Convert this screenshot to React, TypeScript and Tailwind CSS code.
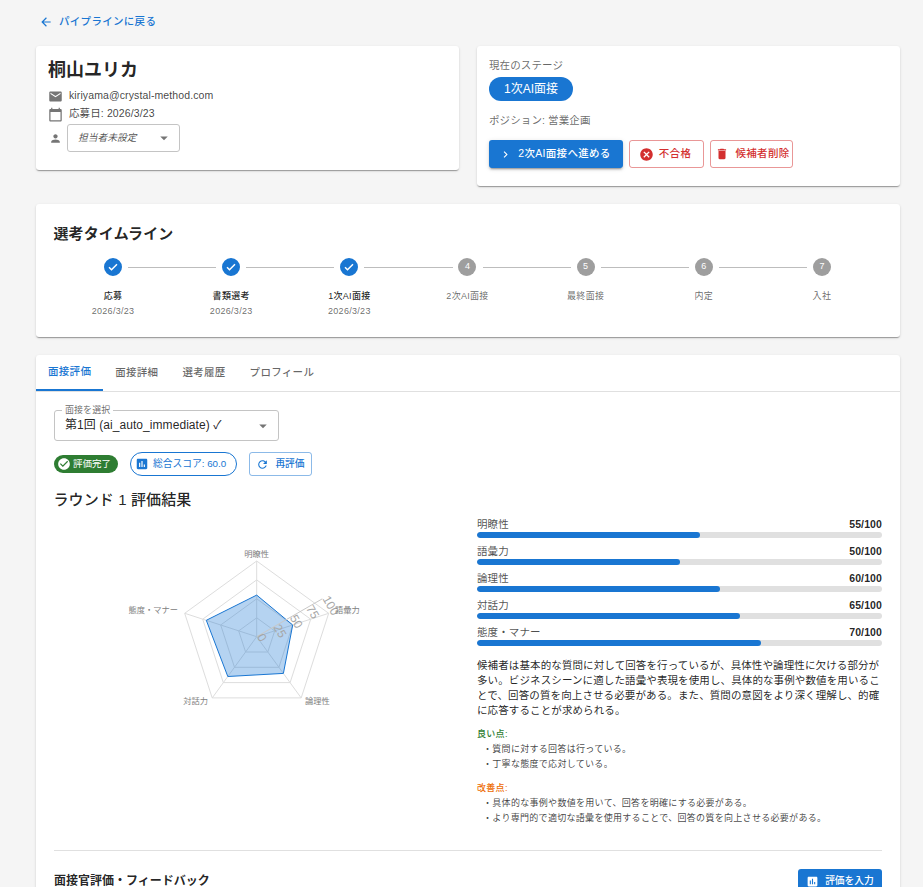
import React from 'react';

const FONT = 'font-["Liberation_Sans","Noto_Sans_CJK_JP",sans-serif]';

const icons = {
  arrowBack: 'M20 11H7.83l5.59-5.59L12 4l-8 8 8 8 1.41-1.41L7.83 13H20v-2z',
  email: 'M20 4H4c-1.1 0-1.99.9-1.99 2L2 18c0 1.1.9 2 2 2h16c1.1 0 2-.9 2-2V6c0-1.1-.9-2-2-2zm0 4l-8 5-8-5V6l8 5 8-5v2z',
  calendar: 'M20 3h-1V1h-2v2H7V1H5v2H4c-1.1 0-2 .9-2 2v16c0 1.1.9 2 2 2h16c1.1 0 2-.9 2-2V5c0-1.1-.9-2-2-2zm0 18H4V8h16v13z',
  person: 'M12 12c2.21 0 4-1.79 4-4s-1.79-4-4-4-4 1.79-4 4 1.79 4 4 4zm0 2c-2.67 0-8 1.34-8 4v2h16v-2c0-2.66-5.33-4-8-4z',
  dropDown: 'M7 10l5 5 5-5z',
  next: 'M10 6L8.59 7.41 13.17 12l-4.58 4.59L10 18l6-6z',
  cancel: 'M12 2C6.47 2 2 6.47 2 12s4.47 10 10 10 10-4.47 10-10S17.53 2 12 2zm5 13.59L15.59 17 12 13.41 8.41 17 7 15.59 10.59 12 7 8.41 8.41 7 12 10.59 15.59 7 17 8.41 13.41 12 17 15.59z',
  trash: 'M6 19c0 1.1.9 2 2 2h8c1.1 0 2-.9 2-2V7H6v12zM19 4h-3.5l-1-1h-5l-1 1H5v2h14V4z',
  checkCircle: 'M12 2C6.48 2 2 6.48 2 12s4.48 10 10 10 10-4.48 10-10S17.52 2 12 2zm-2 15l-5-5 1.41-1.41L10 14.17l7.59-7.59L19 8l-9 9z',
  assessment: 'M19 3H5c-1.1 0-2 .9-2 2v14c0 1.1.9 2 2 2h14c1.1 0 2-.9 2-2V5c0-1.1-.9-2-2-2zM9 17H7v-7h2v7zm4 0h-2V7h2v10zm4 0h-2v-4h2v4z',
  refresh: 'M17.65 6.35C16.2 4.9 14.21 4 12 4c-4.42 0-7.99 3.58-7.99 8s3.57 8 7.99 8c3.73 0 6.84-2.55 7.73-6h-2.08c-.82 2.33-3.04 4-5.65 4-3.31 0-6-2.69-6-6s2.69-6 6-6c1.66 0 3.14.69 4.22 1.78L13 11h7V4l-2.35 2.35z',
  stepCheck: 'M12 0a12 12 0 1 0 0 24 12 12 0 0 0 0-24zm-2 17l-4-4 1.4-1.4 2.6 2.6 6.6-6.6L18 9l-8 8z',
};

const Icon = ({ d, className }: { d: string; className: string }) => (
  <svg viewBox="0 0 24 24" fill="currentColor" className={className}>
    <path d={d} />
  </svg>
);

const Card = ({ className, children }: { className?: string; children: React.ReactNode }) => (
  <div className={`bg-white rounded-[3px] shadow-[0_2px_1px_-1px_rgba(0,0,0,0.2),0_1px_1px_0_rgba(0,0,0,0.14),0_1px_3px_0_rgba(0,0,0,0.12)] ${className ?? ''}`}>
    {children}
  </div>
);

const steps = [
  { label: '応募', date: '2026/3/23', done: true },
  { label: '書類選考', date: '2026/3/23', done: true },
  { label: '1次AI面接', date: '2026/3/23', done: true },
  { label: '2次AI面接', n: 4 },
  { label: '最終面接', n: 5 },
  { label: '内定', n: 6 },
  { label: '入社', n: 7 },
];

const scores = [
  { label: '明瞭性', value: 55 },
  { label: '語彙力', value: 50 },
  { label: '論理性', value: 60 },
  { label: '対話力', value: 65 },
  { label: '態度・マナー', value: 70 },
];

// chart origin sits at x=54, y=517 on the page
const CX = 202.7;
const CY = 119.7;
const R = 75.7;
const pt = (i: number, r: number) => {
  const a = ((90 - i * 72) * Math.PI) / 180;
  return [CX + r * Math.cos(a), CY - r * Math.sin(a)];
};
const poly = (f: (i: number) => number) =>
  [0, 1, 2, 3, 4].map((i) => pt(i, f(i)).map((v) => v.toFixed(1)).join(',')).join(' ');

const Radar = () => (
  <svg viewBox="0 0 423 240" className="w-[423px] h-[240px] block">
    {[0.25, 0.5, 0.75, 1].map((k) => (
      <polygon key={k} points={poly(() => R * k)} fill="none" stroke="#dddddd" strokeWidth="1" />
    ))}
    {[0, 1, 2, 3, 4].map((i) => {
      const [x, y] = pt(i, R);
      return <line key={i} x1={CX} y1={CY} x2={x} y2={y} stroke="#dddddd" />;
    })}
    <polygon
      points={poly((i) => (R * scores[i].value) / 100)}
      fill="#1976d2"
      fillOpacity="0.32"
      stroke="#1976d2"
      strokeWidth="1"
    />
    <line x1={CX} y1={CY} x2={CX + R * Math.cos(Math.PI / 6)} y2={CY - R * Math.sin(Math.PI / 6)} stroke="#c8c8c8" />
    {[0, 25, 50, 75, 100].map((t) => {
      const r = (R * t) / 100;
      const x = CX + r * Math.cos(Math.PI / 6);
      const y = CY - r * Math.sin(Math.PI / 6);
      return (
        <text key={t} x={x} y={y} transform={`rotate(60 ${x} ${y})`} fontSize="12" fill="#a6a6a6" textAnchor="start">
          {t}
        </text>
      );
    })}
    <text x="202.7" y="40" fontSize="8.25" fill="#808080" textAnchor="middle">明瞭性</text>
    <text x="281" y="96" fontSize="8.25" fill="#808080">語彙力</text>
    <text x="251" y="187" fontSize="8.25" fill="#808080">論理性</text>
    <text x="154" y="187" fontSize="8.25" fill="#808080" textAnchor="end">対話力</text>
    <text x="124" y="96" fontSize="8.25" fill="#808080" textAnchor="end">態度・マナー</text>
  </svg>
);

export default function App() {
  return (
    <div className={`${FONT} h-screen overflow-hidden bg-[#f5f5f5] pl-9 pr-[23px] text-[rgba(0,0,0,0.87)]`}>
      <div className="pt-[13px] h-[46px]">
        <div className="flex items-center h-[18px] pl-[3px] gap-[6px] text-[#1976d2]">
          <Icon d={icons.arrowBack} className="w-[14px] h-[14px]" />
          <span className="text-[10.5px] font-medium tracking-[0.02857em]">パイプラインに戻る</span>
        </div>
      </div>

      <div className="grid grid-cols-2 gap-[18px] items-start">
        <Card className="h-[124px] px-3 pt-3">
          <h1 className="text-[18px] leading-[22px] font-bold mt-[1px]">桐山ユリカ</h1>
          <div className="mt-[7px] flex items-center gap-[6px] h-[16px] text-[10.5px] tracking-[0.01071em] text-[rgba(0,0,0,0.75)]">
            <Icon d={icons.email} className="w-[15px] h-[15px] text-[#757575]" />
            <span>kiriyama@crystal-method.com</span>
          </div>
          <div className="mt-[2px] flex items-center gap-[6px] h-[16px] text-[10.5px] tracking-[0.01071em] text-[rgba(0,0,0,0.75)]">
            <Icon d={icons.calendar} className="w-[15px] h-[15px] text-[#757575]" />
            <span>応募日: 2026/3/23</span>
          </div>
          <div className="mt-[2px] flex items-center gap-[5px]">
            <Icon d={icons.person} className="w-[13px] h-[13px] text-[#757575] ml-[1px]" />
            <div className="w-[113px] h-[28px] border border-[#c4c4c4] rounded-[3px] flex items-center justify-between pl-[10px] pr-[6px]">
              <span className="text-[9.75px] italic text-[rgba(0,0,0,0.7)]">担当者未設定</span>
              <Icon d={icons.dropDown} className="w-[18px] h-[18px] text-[#757575]" />
            </div>
          </div>
        </Card>

        <Card className="h-[140px] px-3 pt-3">
          <div className="text-[10.5px] leading-[15px] tracking-[0.01071em] text-[rgba(0,0,0,0.6)]">現在のステージ</div>
          <div className="mt-[4px] w-[84px] h-[24px] rounded-full bg-[#1976d2] text-white text-[12px] flex items-center justify-center">
            1次AI面接
          </div>
          <div className="mt-[12px] text-[10.5px] leading-[15px] tracking-[0.01071em] text-[rgba(0,0,0,0.6)]">ポジション: 営業企画</div>
          <div className="mt-[12px] flex gap-[6px]">
            <div className="w-[134px] h-[28px] pr-[2px] rounded-[3px] bg-[#1976d2] text-white flex items-center justify-center gap-[6px] text-[10.5px] font-medium tracking-[0.02857em] shadow-[0_3px_1px_-2px_rgba(0,0,0,0.2),0_2px_2px_0_rgba(0,0,0,0.14),0_1px_5px_0_rgba(0,0,0,0.12)]">
              <Icon d={icons.next} className="w-[13px] h-[13px]" />
              <span>2次AI面接へ進める</span>
            </div>
            <div className="w-[75px] h-[28px] pr-[3px] rounded-[3px] border border-[rgba(211,47,47,0.5)] text-[#d32f2f] flex items-center justify-center gap-[5px] text-[10.5px] font-medium tracking-[0.02857em]">
              <Icon d={icons.cancel} className="w-[15px] h-[15px]" />
              <span>不合格</span>
            </div>
            <div className="w-[83px] h-[28px] pl-[1px] rounded-[3px] border border-[rgba(211,47,47,0.5)] text-[#d32f2f] flex items-center justify-center gap-[7px] text-[10.5px] font-medium tracking-[0.02857em]">
              <Icon d={icons.trash} className="w-[14px] h-[14px]" />
              <span>候補者削除</span>
            </div>
          </div>
        </Card>
      </div>

      <Card className="mt-[18px] h-[133px] px-[18px] pt-[20px]">
        <h2 className="text-[15px] leading-[20px] font-bold tracking-[0.0075em] -ml-[0.5px]">選考タイムライン</h2>
        <div className="mt-[14px] grid grid-cols-7 w-[827px]">
          {steps.map((s, i) => (
            <div key={s.label} className="relative flex flex-col items-center">
              {i > 0 && <div className="absolute top-[8.5px] left-[-50%] right-[50%] mx-[15px] border-t border-[#bdbdbd]" />}
              {s.done ? (
                <Icon d={icons.stepCheck} className="w-[18px] h-[18px] text-[#1976d2]" />
              ) : (
                <div className="w-[18px] h-[18px] rounded-full bg-[#9e9e9e] text-white text-[9px] flex items-center justify-center">
                  {s.n}
                </div>
              )}
              <div className={`mt-[14px] text-[9px] leading-[13px] tracking-[0.03333em] ${s.done ? 'font-medium text-[rgba(0,0,0,0.87)]' : 'text-[rgba(0,0,0,0.6)]'}`}>
                {s.label}
              </div>
              {s.date && <div className="mt-[2px] text-[9px] leading-[13px] tracking-[0.03333em] text-[rgba(0,0,0,0.6)]">{s.date}</div>}
            </div>
          ))}
        </div>
      </Card>

      <Card className="mt-[18px] h-[700px]">
        <div className="flex h-[37px] border-b border-[#e0e0e0] text-[10.5px] font-medium tracking-[0.02857em] text-[rgba(0,0,0,0.6)]">
          <div className="h-[36px] px-3 flex items-center text-[#1976d2] border-b-2 border-[#1976d2]">面接評価</div>
          <div className="h-[36px] px-3 flex items-center">面接詳細</div>
          <div className="h-[36px] px-3 flex items-center">選考履歴</div>
          <div className="h-[36px] px-3 flex items-center">プロフィール</div>
        </div>

        <div className="px-[18px] pt-[18px]">
          <div className="relative w-[225px] h-[31px] border border-[#c4c4c4] rounded-[3px] flex items-center justify-between pl-[10px] pr-[6px] text-[12px] tracking-[0.005em]">
            <span className="absolute left-[7px] top-[-6px] bg-white px-[3px] text-[9px] leading-[10px] text-[rgba(0,0,0,0.6)]">面接を選択</span>
            <span className="-mt-[1px]">第1回 (ai_auto_immediate) ✓</span>
            <Icon d={icons.dropDown} className="w-[18px] h-[18px] text-[#757575]" />
          </div>

          <div className="mt-[11px] flex items-center">
            <div className="w-[64px] h-[18px] rounded-full bg-[#2e7d32] text-white flex items-center gap-[2px] pl-[3px] text-[9.5px]">
              <Icon d={icons.checkCircle} className="w-[14px] h-[14px]" />
              <span>評価完了</span>
            </div>
            <div className="ml-[12px] w-[107px] h-[24px] rounded-full border border-[#1976d2] text-[#1976d2] flex items-center gap-[4px] pl-[4px] text-[9.75px]">
              <Icon d={icons.assessment} className="w-[14px] h-[14px]" />
              <span>総合スコア: 60.0</span>
            </div>
            <div className="ml-[12px] w-[63px] h-[24px] rounded-[3px] border border-[rgba(25,118,210,0.5)] text-[#1976d2] flex items-center justify-center gap-[6px] text-[9.75px] font-medium">
              <Icon d={icons.refresh} className="w-[13px] h-[13px]" />
              <span>再評価</span>
            </div>
          </div>

          <h3 className="mt-[14px] text-[15px] leading-[20px] font-medium tracking-[0.0075em] -ml-[0.5px]">ラウンド 1 評価結果</h3>

          <div className="mt-[7px] grid grid-cols-[423px_405px]">
            <Radar />
            <div>
              {scores.map((s) => (
                <div key={s.label} className="h-[27px]">
                  <div className="flex justify-between text-[10.5px] leading-[15px] tracking-[0.01071em]">
                    <span className="text-[rgba(0,0,0,0.7)]">{s.label}</span>
                    <span className="font-bold">{s.value}/100</span>
                  </div>
                  <div className="h-[6px] rounded-full bg-[#e0e0e0] overflow-hidden">
                    <div className="h-full rounded-full bg-[#1976d2]" style={{ width: `${s.value}%` }} />
                  </div>
                </div>
              ))}
              <p className="mt-[6px] text-[10.5px] leading-[15px] tracking-[0.01071em] text-[rgba(0,0,0,0.87)]">
                候補者は基本的な質問に対して回答を行っているが、具体性や論理性に欠ける部分が多い。ビジネスシーンに適した語彙や表現を使用し、具体的な事例や数値を用いることで、回答の質を向上させる必要がある。また、質問の意図をより深く理解し、的確に応答することが求められる。
              </p>
              <div className="mt-[9px] text-[9px] leading-[15px] font-medium tracking-[0.03333em] text-[#2e7d32]">良い点:</div>
              <ul className="text-[9px] leading-[15px] tracking-[0.03333em] text-[rgba(0,0,0,0.75)] pl-[6px]">
                <li>・質問に対する回答は行っている。</li>
                <li>・丁寧な態度で応対している。</li>
              </ul>
              <div className="mt-[9px] text-[9px] leading-[15px] font-medium tracking-[0.03333em] text-[#ed6c02]">改善点:</div>
              <ul className="text-[9px] leading-[15px] tracking-[0.03333em] text-[rgba(0,0,0,0.75)] pl-[6px]">
                <li>・具体的な事例や数値を用いて、回答を明確にする必要がある。</li>
                <li>・より専門的で適切な語彙を使用することで、回答の質を向上させる必要がある。</li>
              </ul>
            </div>
          </div>

          <div className="mt-[24px] border-t border-[#e0e0e0] pt-[18px] flex items-center justify-between">
            <h4 className="text-[12px] font-bold">面接官評価・フィードバック</h4>
            <div className="w-[84px] h-[24px] rounded-[3px] bg-[#1976d2] text-white flex items-center justify-center gap-[6px] text-[9.75px] font-medium">
              <Icon d={icons.assessment} className="w-[13px] h-[13px]" />
              <span>評価を入力</span>
            </div>
          </div>
        </div>
      </Card>
    </div>
  );
}
